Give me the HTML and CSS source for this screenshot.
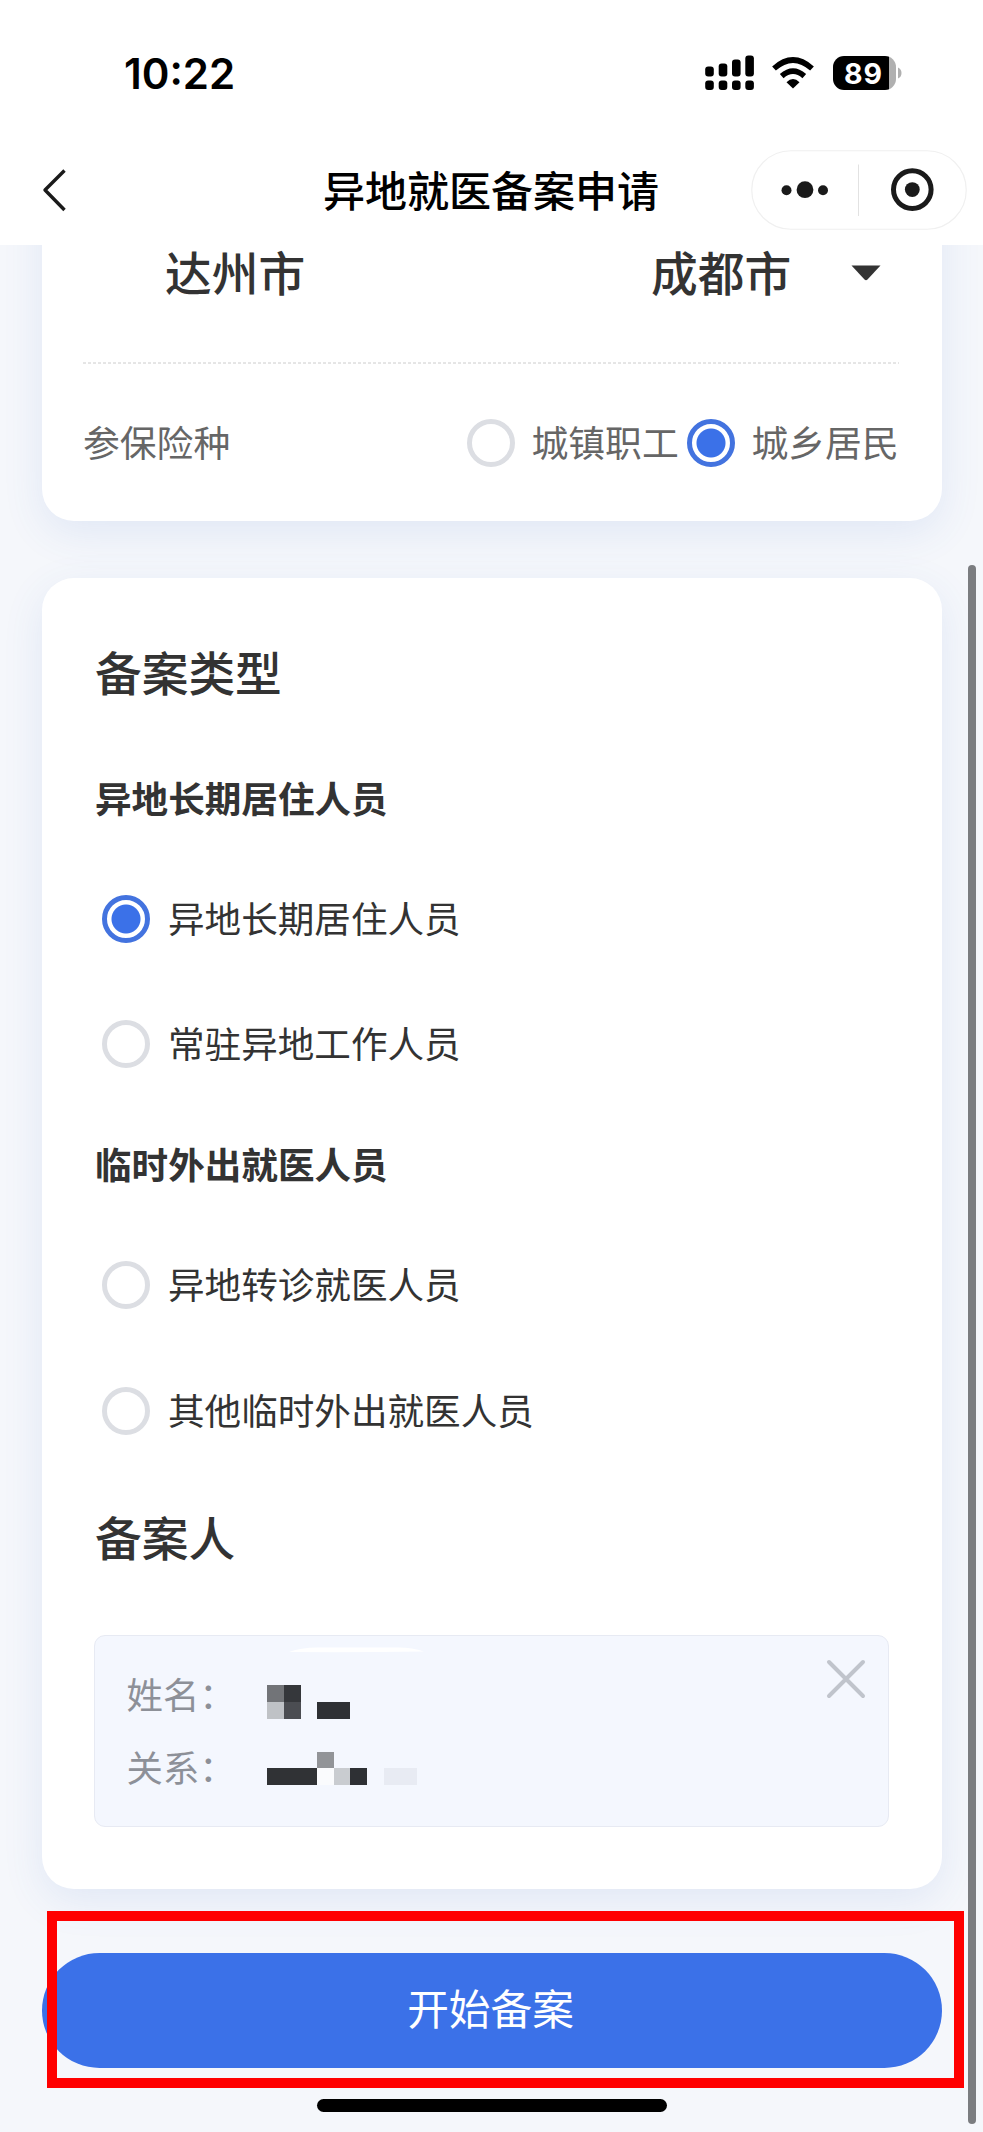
FILE: index.html
```html
<!DOCTYPE html>
<html lang="zh-CN">
<head>
<meta charset="utf-8">
<title>异地就医备案申请</title>
<link rel="stylesheet" href="styles.css">
</head>
<body>
<div class="screen">
  <header class="header">
    <div class="status">
      <span class="time">10:22</span>
      <svg class="signal" width="50" height="36" viewBox="0 0 50 36">
        <rect x="0.2" y="11.5" width="8.6" height="10" rx="3"/><rect x="13.7" y="8.5" width="8.6" height="13" rx="3"/><rect x="27" y="4.5" width="8.6" height="17" rx="3"/><rect x="40.3" y="0.5" width="8.6" height="21" rx="3"/>
        <rect x="0.2" y="25.5" width="8.6" height="9.5" rx="3"/><rect x="13.7" y="25.5" width="8.6" height="9.5" rx="3"/><rect x="27" y="25.5" width="8.6" height="9.5" rx="3"/><rect x="40.3" y="25.5" width="8.6" height="9.5" rx="3"/>
      </svg>
      <svg class="wifi" width="42" height="32" viewBox="0 0 42 32">
        <path d="M2 11.5Q21-5.5 40 11.5M9.7 19.2Q21 9.200 32.300 19.2" fill="none" stroke="#000" stroke-width="5.600"/>
        <path d="M21 31.500L14.500 25.200Q21 18.800 27.500 25.200Z"/>
      </svg>
      <div class="battery"><span class="level">89</span></div>
      <svg class="nub" width="4" height="12" viewBox="0 0 4 12"><path d="M0 0.500Q3.500 2 3.500 6T0 11.500Z" fill="#b0b0b0"/></svg>
    </div>
    <nav class="nav">
      <svg class="back" width="26" height="46" viewBox="0 0 26 46"><path d="M23.500 3.500L4 23L23.500 43" fill="none" stroke="#1a1a1a" stroke-width="3.400" stroke-linejoin="round"/></svg>
      <h1 class="title">异地就医备案申请</h1>
      <div class="capsule">
        <svg width="216" height="80" viewBox="0 0 216 80">
          <rect x="0.750" y="0.750" width="214.500" height="78.500" rx="39.250" fill="#fff" stroke="#f0f0f0" stroke-width="1.200"/>
          <path d="M107.500 14.500V66" stroke="#e2e2e2" stroke-width="1"/>
          <g fill="#1a1a1a"><circle cx="35.500" cy="40.200" r="5"/><circle cx="54" cy="39.700" r="8.400"/><circle cx="72" cy="40.200" r="5"/><circle cx="161.300" cy="39.600" r="7.400"/></g>
          <circle cx="161.300" cy="39.600" r="18.800" fill="none" stroke="#1a1a1a" stroke-width="5"/>
        </svg>
      </div>
    </nav>
  </header>

  <main class="content">
    <section class="card region">
      <div class="cities">
        <span class="city">达州市</span>
        <span class="city">成都市</span>
        <svg class="caret" width="30" height="16" viewBox="0 0 30 16"><path d="M0.500 0.500H29.500L16.500 14.500Q15 16 13.500 14.500Z" fill="#333"/></svg>
      </div>
      <svg class="dash" width="816" height="2" viewBox="0 0 816 2"><path d="M0 1H816" stroke="#ccc" stroke-width="1" stroke-dasharray="3 2"/></svg>
      <div class="insurance">
        <span class="label">参保险种</span>
        <i class="radio"></i><span class="choice">城镇职工</span>
        <i class="radio on"></i><span class="choice">城乡居民</span>
      </div>
    </section>

    <section class="card types">
      <h2 class="heading">备案类型</h2>
      <h3 class="group">异地长期居住人员</h3>
      <div class="option"><i class="radio on"></i><span>异地长期居住人员</span></div>
      <div class="option"><i class="radio"></i><span>常驻异地工作人员</span></div>
      <h3 class="group">临时外出就医人员</h3>
      <div class="option"><i class="radio"></i><span>异地转诊就医人员</span></div>
      <div class="option"><i class="radio"></i><span>其他临时外出就医人员</span></div>
      <h2 class="heading applicant">备案人</h2>
      <div class="person">
        <div class="fields"><span>姓名：</span><span>关系：</span></div>
        <svg class="mask" width="160" height="150" viewBox="0 0 160 150" shape-rendering="crispEdges">
          <path d="M22 6Q34 1.500 50 1.500H132Q145 1.500 157 5.500Q90 6.500 22 6Z" fill="#fff" shape-rendering="auto"/>
          <rect x="0" y="39" width="17" height="17" fill="#727478"/><rect x="16.500" y="39" width="17" height="17" fill="#35373b"/>
          <rect x="0" y="55.500" width="17" height="17" fill="#bfc2c6"/><rect x="16.500" y="55.500" width="17" height="17" fill="#4b4d52"/>
          <rect x="50" y="55.500" width="33" height="17" fill="#2e3034"/>
          <rect x="50" y="106" width="17" height="16.500" fill="#929498"/>
          <rect x="0" y="122" width="50" height="17" fill="#303235"/><rect x="50" y="122" width="17" height="17" fill="#fafbfd"/>
          <rect x="66.500" y="122" width="17" height="17" fill="#c9ccd0"/><rect x="83" y="122" width="17" height="17" fill="#2e3034"/>
          <rect x="117" y="122" width="33" height="17" fill="#e8ebf3"/>
        </svg>
        <svg class="close" width="40" height="40" viewBox="0 0 40 40"><path d="M3 3L37 37M37 3L3 37" stroke="#c0c4cc" stroke-width="4" stroke-linecap="round"/></svg>
      </div>
    </section>

    <button class="submit">开始备案</button>
    <div class="home"></div>
  </main>
  <div class="scrollbar"></div>
  <div class="highlight"></div>
</div>
</body>
</html>
```
FILE: styles.css
```css
* { box-sizing: border-box; }
body {
  margin: 0;
  font-family: "Noto Sans CJK SC", sans-serif;
  color: #333;
}
h1, h2, h3 { margin: 0; }
svg { display: block; flex: none; }
.screen {
  position: relative;
  display: flow-root;
  width: 983px;
  height: 2132px;
  overflow: hidden;
  background: #f5f7fb;
}

/* Status bar and navigation */
.header {
  position: relative;
  z-index: 1;
  height: 245px;
  background: #fff;
}
.status {
  display: flex;
  align-items: center;
  height: 146px;
  padding-left: 124px;
}
.time {
  width: 581px;
  padding-top: 1px;
  font: 600 42px/50px Inter, sans-serif;
  color: #000;
}
.wifi { margin-left: 17px; }
.battery {
  width: 63px;
  height: 34px;
  margin-left: 19px;
  border-radius: 11px;
  background: linear-gradient(90deg, #000 56px, #b0b0b0 56px);
}
.level {
  display: block;
  padding-left: 11px;
  font: 700 28.500px/35px Inter, sans-serif;
  letter-spacing: 1px;
  color: #fff;
}
.nub { margin-left: 2px; }
.nav {
  display: grid;
  grid-template-columns: 323px 336px 1fr;
  align-items: center;
  height: 88px;
}
.back { margin-left: 41px; }
.title {
  padding-bottom: 2px;
  font-size: 42px;
  line-height: 58px;
  font-weight: 500;
  color: #000;
  white-space: nowrap;
  text-align: center;
}
.capsule { padding-left: 92px; }

/* Scrolling content */
.content {
  display: flow-root;
  height: 1887px;
  padding: 0 41.500px;
}
.card {
  background: #fff;
  border-radius: 32px;
  box-shadow: 0 12px 42px rgba(60, 110, 200, 0.11);
}
.region {
  height: 356px;
  margin-top: -80px;
  padding: 80px 41.500px 0;
}
.cities {
  display: flex;
  height: 117px;
  padding-left: 82px;
}
.city {
  width: 486px;
  font-size: 46.700px;
  line-height: 52px;
  font-weight: 500;
}
.city + .city { width: 200px; }
.caret { margin-top: 20px; }
.insurance {
  display: flex;
  align-items: center;
  height: 157px;
  font-size: 36.800px;
  color: #666;
}
.insurance span { line-height: 50px; padding-bottom: 3px; white-space: nowrap; }
.label { width: 383.500px; flex: none; }
.radio {
  flex: none;
  width: 48px;
  height: 48px;
  border: 5px solid #dcdee3;
  border-radius: 50%;
  background: #fff;
}
.radio.on {
  border-color: #4373df;
  background: radial-gradient(circle, #3b71e8 14px, #fff 15px);
}
.insurance .choice { flex: none; width: 155px; margin-left: 17px; }

.types {
  height: 1311.500px;
  margin-top: 56.500px;
  padding: 63px 52.500px 0 53.500px;
}
.heading {
  font-size: 46.700px;
  line-height: 60px;
  font-weight: 500;
}
.group {
  margin-top: 67px;
  font-size: 36.600px;
  line-height: 60px;
  font-weight: 700;
}
.option {
  display: flex;
  align-items: center;
  gap: 18px;
  height: 60px;
  margin-top: 65.500px;
  padding-left: 7px;
  font-size: 36.600px;
}
.group + .option { margin-top: 61px; }
.option span { line-height: 56px; padding-bottom: 2px; }
.option + .group { margin-top: 60px; }
.applicant { margin-top: 65px; }
.person {
  display: flex;
  width: 795px;
  height: 192px;
  margin-top: 69px;
  margin-left: -1px;
  border: 1.500px solid #e7eaf3;
  border-radius: 11px;
  background: #f4f7fe;
}
.fields {
  display: flex;
  flex-direction: column;
  width: 172px;
  padding: 21px 0 0 31.500px;
  font-size: 36.400px;
  line-height: 73.500px;
  color: #8d9098;
}
.mask { margin-top: 10px; }
.close { margin: 23px 0 0 399px; }
.submit {
  display: block;
  width: 900px;
  height: 115.500px;
  margin-top: 63.500px;
  padding: 0 2px 7px 0;
  border: 0;
  border-radius: 58px;
  background: #3b71e8;
  color: #fff;
  font: 400 41.700px/60px "Noto Sans CJK SC", sans-serif;
}
.home {
  width: 350px;
  height: 13px;
  margin: 31px auto 0;
  border-radius: 7px;
  background: #000;
}

/* Overlays */
.scrollbar {
  position: absolute;
  left: 968px;
  top: 565px;
  width: 8px;
  height: 1559px;
  border-radius: 4px;
  background: #7b7d80;
}
.highlight {
  position: absolute;
  left: 47px;
  top: 1911px;
  width: 917px;
  height: 177px;
  border: 10px solid #f00;
}
```
